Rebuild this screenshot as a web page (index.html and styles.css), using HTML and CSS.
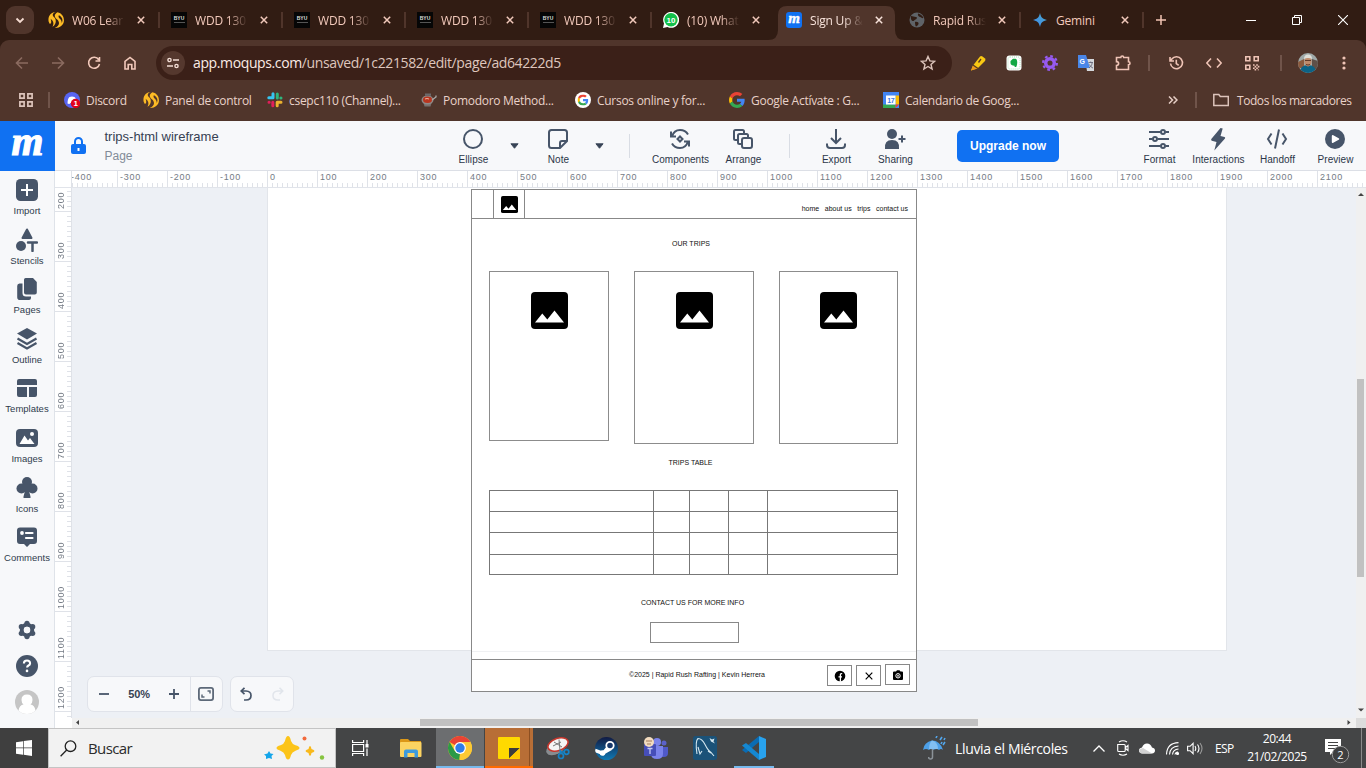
FILE: index.html
```html
<!DOCTYPE html>
<html lang="es">
<head>
<meta charset="utf-8">
<title>Sign Up &amp; moqups</title>
<link rel="stylesheet" href="styles.css">
</head>
<body>
<svg class="defs" aria-hidden="true">
  <defs>
    <symbol id="x" viewBox="0 0 8 8"><path d="M.8.8l6.400 6.400M7.200.8L.8 7.200" fill="none" stroke="currentColor" stroke-width="1.500"/></symbol>
    <symbol id="path" viewBox="0 0 16 16"><path d="M.6 9.500C-.4 3.800 3.500 0 7.800 0 4.500 1 3.900 3.200 5.800 5 8.700 7.200 8.600 12 4.500 14.800 6.500 11 4.900 8.500 2.600 6.800 3.700 9.500 3.300 12 1.600 11.800zM9.500.2C14 1 16.400 5.300 15.900 9.300 15.300 13.500 11.500 16.300 6.800 15.900 11.500 14 12 10.500 9.500 7.800 5.700 4.500 6 2.500 9.500.2zM11 3.200c-1.300 1.600.2 2.700 1.600 4.200 1 1.200 1.300 2.700 1 4 1.800-3.500.6-6.500-2.600-8.200z" fill="#fdbb25"/></symbol>
    <symbol id="g" viewBox="0 0 48 48"><path fill="#ea4335" d="M24 9.500c3.540 0 6.710 1.220 9.210 3.600l6.850-6.850C35.900 2.380 30.470 0 24 0 14.620 0 6.510 5.380 2.560 13.220l7.980 6.190C12.430 13.720 17.740 9.500 24 9.500z"/><path fill="#4285f4" d="M46.980 24.550c0-1.570-.15-3.090-.38-4.550H24v9.020h12.940c-.58 2.960-2.260 5.480-4.780 7.180l7.730 6c4.510-4.180 7.090-10.360 7.090-17.650z"/><path fill="#fbbc05" d="M10.530 28.590c-.48-1.450-.76-2.990-.76-4.590s.27-3.140.76-4.590l-7.980-6.190C.92 16.460 0 20.120 0 24s.92 7.540 2.560 10.780l7.970-6.190z"/><path fill="#34a853" d="M24 48c6.480 0 11.930-2.130 15.890-5.810l-7.730-6c-2.150 1.450-4.920 2.300-8.160 2.300-6.260 0-11.570-4.220-13.470-9.910l-7.980 6.190C6.510 42.620 14.620 48 24 48z"/></symbol>
    <symbol id="pic" viewBox="0 0 37 37"><rect width="37" height="37" rx="4" fill="#000"/><path d="M4 30.500l7.300-9 5 6 7.200-9L33 30.500z" fill="#fff"/></symbol>
    <symbol id="caret" viewBox="0 0 10 6"><path d="M1 .5h8L5 5.500z" fill="currentColor" stroke="currentColor" stroke-linejoin="round"/></symbol>
  </defs>
</svg>

<header class="tabs">
  <button class="tab-menu"><svg width="10" height="7" viewBox="0 0 10 7"><path d="M1.500 1.500L5 5l3.500-3.500" fill="none" stroke="#f6dcd2" stroke-width="1.800"/></svg></button>
  <div class="tab"><svg class="fav"><use href="#path"/></svg><span class="ttl">W06 Lear</span><svg class="cls"><use href="#x"/></svg></div>
  <div class="tab"><i class="fav byu">BYU<b></b></i><span class="ttl">WDD 130</span><svg class="cls"><use href="#x"/></svg></div>
  <div class="tab"><i class="fav byu">BYU<b></b></i><span class="ttl">WDD 130</span><svg class="cls"><use href="#x"/></svg></div>
  <div class="tab"><i class="fav byu">BYU<b></b></i><span class="ttl">WDD 130</span><svg class="cls"><use href="#x"/></svg></div>
  <div class="tab"><i class="fav byu">BYU<b></b></i><span class="ttl">WDD 130</span><svg class="cls"><use href="#x"/></svg></div>
  <div class="tab nosep"><svg class="fav" viewBox="0 0 16 16"><path d="M0 16l1-4.500A8 8 0 1 1 4.500 15z" fill="#fff"/><circle cx="8" cy="7.800" r="6.700" fill="#12c04a"/><text x="8" y="10.800" class="wa">10</text></svg><span class="ttl">(10) What</span><svg class="cls"><use href="#x"/></svg></div>
  <div class="tab active nosep"><svg class="shape" width="137" height="34"><path d="M0 34q10 0 10-10V9q0-9 9-9h99q9 0 9 9v15q0 10 10 10z" fill="#50352b"/></svg><i class="fav mq">m</i><span class="ttl">Sign Up &amp;</span><svg class="cls"><use href="#x"/></svg></div>
  <div class="tab"><svg class="fav" viewBox="0 0 16 16"><circle cx="8" cy="8" r="7.500" fill="#5f6368"/><path d="M2 4c2 0 3 1 5 1 1.500 0 1 2-.5 2.500S5 9.500 3.500 9 1.500 6 2 4zM9 1.500c2 .5 4.500 2 5.500 4.500-1.500.5-2-.5-3.500-1S8.500 3.500 9 1.500zM6 10c2-.5 4 .5 3.500 2S7.500 14.500 7 14.500 6 12 6 10z" fill="#311c13"/></svg><span class="ttl">Rapid Rus</span><svg class="cls"><use href="#x"/></svg></div>
  <div class="tab"><svg class="fav gem" viewBox="0 0 16 16"><defs><linearGradient id="gm" x1="0" y1="1" x2="1" y2="0"><stop offset="0" stop-color="#3f8cf0"/><stop offset="1" stop-color="#4aa6c8"/></linearGradient></defs><path d="M8 1C9 5.500 10.500 7 15 8 10.500 9 9 10.500 8 15 7 10.500 5.500 9 1 8 5.500 7 7 5.500 8 1z" fill="url(#gm)"/></svg><span class="ttl">Gemini</span><svg class="cls"><use href="#x"/></svg></div>
  <svg class="plus" width="10" height="10" viewBox="0 0 10 10"><path d="M5 0v10M0 5h10" stroke="#f2c4b4" stroke-width="1.500"/></svg>
  <div class="win">
    <svg width="10" height="10"><path d="M0 5.500h10" stroke="#fff"/></svg>
    <svg width="10" height="10"><path d="M.5 2.500h7v7h-7zM2.500 2.500v-2h7v7h-2" fill="none" stroke="#fff"/></svg>
    <svg width="10" height="10"><path d="M0 0l10 10M10 0L0 10" stroke="#fff" stroke-width="1.100"/></svg>
  </div>
</header>

<div class="chrome">
  <div class="bar">
    <svg class="nv dim" viewBox="0 0 16 16"><path d="M14 8H2.500M8 2.500L2.500 8 8 13.500"/></svg>
    <svg class="nv dim" viewBox="0 0 16 16"><path d="M2 8h11.500M8 2.500L13.500 8 8 13.500"/></svg>
    <svg class="nv" viewBox="0 0 16 16"><path d="M12.700 4.700A5.500 5.500 0 1 0 13.500 9M13.500 2v4H9.500"/></svg>
    <svg class="nv" viewBox="0 0 16 16"><path d="M3 14V6.500l5-4 5 4V14H9.800V9.500H6.200V14z"/></svg>
    <div class="omni">
      <span class="site"><svg width="12" height="12" viewBox="0 0 12 12" fill="none" stroke="#f4ded6" stroke-width="1.400"><circle cx="2.500" cy="3" r="1.600"/><path d="M6 3h6M0 9h6"/><circle cx="9.500" cy="9" r="1.600"/></svg></span>
      <span class="url"><b>app.moqups.com</b>/unsaved/1c221582/edit/page/ad64222d5</span>
      <svg class="star" viewBox="0 0 16 16"><path d="M8 1.500l1.900 4.400 4.700.4-3.600 3.100 1.100 4.600L8 11.500 3.900 14 5 9.400 1.400 6.300l4.700-.4z"/></svg>
    </div>
    <div class="ext">
      <svg viewBox="0 0 16 16"><path d="M1 15.500l2-5L10 1.500q1-1 2.500 0L15 3.500q1 1 0 2.500L8 13z" fill="#f9c813"/><path d="M1 15.500l2-5 5 3z" fill="#ee9a1c"/><path d="M8.500 7.500l2.500-3.500M3 10l5 3.500" stroke="#5a3a20" stroke-width="1.300"/></svg>
      <svg viewBox="0 0 16 16"><rect x=".5" y=".5" width="15" height="15" rx="3" fill="#fff"/><rect x="2" y="2" width="12" height="12" rx="2" fill="none" stroke="#a9e2bb" stroke-dasharray="1 1"/><path d="M4.500 6L7 3.800h2.500c2 .5 2.200 4.500 1 7.700-1 1-2.200.5-2-.8-2.300 0-4-1-4-2.700z" fill="#13a844"/></svg>
      <svg viewBox="0 0 16 16"><circle cx="8" cy="8" r="4.300" fill="none" stroke="#965af0" stroke-width="3.500"/><circle cx="8" cy="8" r="6.900" fill="none" stroke="#965af0" stroke-width="2.200" stroke-dasharray="2.700 2.720"/></svg>
      <svg viewBox="0 0 16 16"><path d="M7 4h9v12H9z" fill="#d5d8dc"/><path d="M0 0h8l4 13H0z" fill="#4a86e8"/><text x="1.600" y="9" class="gt">G</text><path d="M10.500 7.500h4.500M12.700 6.500v1M11 13c2-1.500 3-3 3.200-5.500M11.500 9.500c1 2 2 3 3.500 3.500" stroke="#667" fill="none" stroke-width=".9"/></svg>
      <svg class="puz" viewBox="0 0 16 16" fill="none" stroke="#efc4b6" stroke-width="1.600"><path d="M1.500 2.500h4.300c0-2 2.900-2 2.900 0h4.800v4.300c2 0 2 2.900 0 2.900v4.800h-12v-4c2.800 0 2.800-3.900 0-3.900z"/></svg>
    </div>
    <i class="sep e1"></i>
    <div class="acts">
      <svg viewBox="0 0 16 16"><path d="M2.500 8.500A6 6 0 1 0 3.800 4L2 6M2 2v4h4M8.300 4.800V8.500l2.400 1.800"/></svg>
      <svg viewBox="0 0 16 16"><path d="M5 3.500L.8 8 5 12.500M11 3.500L15.200 8 11 12.500"/></svg>
      <svg viewBox="0 0 16 16"><path d="M1.800 1.800h4v4h-4zM10.200 1.800h4v4h-4zM1.800 10.200h4v4h-4z"/><path d="M9 10h6M10.600 11.600h6M9 13.200h6M10.600 14.800h4" stroke-dasharray="1.600 1.600"/></svg>
    </div>
    <i class="sep e2"></i>
    <svg class="ava" viewBox="0 0 20 20"><defs><clipPath id="cp"><circle cx="10" cy="10" r="10"/></clipPath></defs><g clip-path="url(#cp)"><path fill="#9fa9a8" d="M0 0h20v20H0z"/><path d="M0 9l6-3v9H0z" fill="#8b5a3e"/><path d="M14 6l6 2v8h-6z" fill="#5f5048"/><path d="M2 20q0-8 8-8t8 8z" fill="#0c6386"/><ellipse cx="10" cy="8.500" rx="3.600" ry="5" fill="#c08a6a"/><path d="M6 6Q6 1.500 10 1.500T14 6q-4-2-8 0z" fill="#deded8"/><path d="M7 7.500h6M8 11.500q2 1 4 0" stroke="#613a2a" fill="none"/></g></svg>
    <svg class="dots" width="4" height="14" fill="#efc4b6"><circle cx="2" cy="2" r="1.600"/><circle cx="2" cy="7" r="1.600"/><circle cx="2" cy="12" r="1.600"/></svg>
  </div>
  <nav class="marks">
    <svg class="apps" width="14" height="14" fill="none" stroke="#dcc3ba" stroke-width="1.700"><path d="M.9.9h4.200v4.200H.9zM8.900.9h4.200v4.200H8.900zM.9 8.900h4.200v4.200H.9zM8.900 8.900h4.200v4.200H8.900z"/></svg>
    <i class="sep"></i>
    <a class="bm w1"><svg viewBox="0 0 16 16"><circle cx="8" cy="8" r="8" fill="#5865f2"/><path d="M3.500 11.500q0-5 2-6.500 2.500-1 5 0 2 1.500 2 6-2 1.500-3 0h-3q-1 1.500-3 .5z" fill="#fff"/><circle cx="11.500" cy="11.500" r="4.700" fill="#e0001b"/><text x="11.500" y="14.300" class="bd">1</text></svg><span>Discord</span></a>
    <a class="bm w2"><svg><use href="#path"/></svg><span>Panel de control</span></a>
    <a class="bm"><svg viewBox="0 0 16 16" fill="none" stroke-width="3" stroke-linecap="round"><path d="M6 1.800v4M1.800 5.800h4" stroke="#36c5f0"/><path d="M10.300 2v4M13.800 6h.2" stroke="#2eb67d"/><path d="M10.200 10.200v3.600M10.200 10.200h3.800" stroke="#ecb22e"/><path d="M5.800 10.200v3.600M2 10.200h.2" stroke="#e01e5a"/></svg><span>csepc110 (Channel)...</span></a>
    <a class="bm"><svg viewBox="0 0 16 16"><path d="M2.500 11h8l-1 3.500h-6z" fill="#77706e"/><ellipse cx="6.500" cy="8" rx="6" ry="4.500" fill="#8f8a88"/><ellipse cx="6.500" cy="7.800" rx="4.500" ry="3.200" fill="#b8351f"/><path d="M11 8l4-3v-1.500" stroke="#a9a9a8" stroke-width="1.300" fill="none"/><path d="M4 1.500h6v2.300H4z" fill="#6b6a6c"/><path d="M4 7q2-1 4 0" stroke="#f2b4a0" fill="none"/></svg><span>Pomodoro Method...</span></a>
    <a class="bm"><svg viewBox="0 0 16 16"><circle cx="8" cy="8" r="8" fill="#fff"/><use href="#g" x="2.500" y="2.500" width="11" height="11"/></svg><span>Cursos online y for...</span></a>
    <a class="bm"><svg><use href="#g"/></svg><span>Google Actívate : G...</span></a>
    <a class="bm"><svg viewBox="0 0 16 16"><path d="M0 0h16v16H0z" fill="#4285f4"/><path d="M12.500 3.500H16v9h-3.500z" fill="#fbbc04"/><path d="M0 12.500h12.500V16H0z" fill="#34a853"/><path d="M12.500 12.500H16L12.500 16z" fill="#ea4335"/><path d="M3 3.500h9.500v9H3z" fill="#fff"/><text x="7.800" y="11" class="cal">17</text></svg><span>Calendario de Goog...</span></a>
    <svg class="more" width="10" height="8" fill="none" stroke="#e7cfc6" stroke-width="1.500"><path d="M1 .5L4.500 4 1 7.500M5.500.5L9 4 5.500 7.500"/></svg>
    <i class="sep s2"></i>
    <a class="bm all"><svg viewBox="0 0 16 16" fill="none" stroke="#dcc3ba" stroke-width="1.500"><path d="M.8 13.500v-11h5l1.500 2h8v9z"/></svg><span>Todos los marcadores</span></a>
  </nav>
</div>

<main class="app">
  <aside class="side">
    <div class="logo">m</div>
    <div class="tool"><svg viewBox="0 0 22 22"><rect width="22" height="22" rx="4.500"/><path d="M11 5v12M5 11h12" stroke="#fff" stroke-width="2"/></svg>Import</div>
    <div class="tool"><svg viewBox="0 0 22 24" class="tall"><path d="M11 1.500l4.500 8.500h-9z" stroke="#475569" stroke-width="2" stroke-linejoin="round"/><circle cx="5" cy="18" r="5"/><path d="M12 14.500h9M16.500 14.500V23" stroke="#475569" stroke-width="2.500" stroke-linecap="round"/></svg>Stencils</div>
    <div class="tool"><svg viewBox="0 0 22 22"><path d="M10.500 0h6.500l3.800 4v10.500a2 2 0 0 1-2 2H10a2 2 0 0 1-2-2V2a2 2 0 0 1 2.500-2z"/><path d="M3.500 5.500h3V15q0 3.500 3.500 3.500h5V20q0 2-2 2H4q-2.800 0-2.800-2.800V8q0-2.500 2.300-2.500z"/></svg>Pages</div>
    <div class="tool"><svg viewBox="0 0 22 22"><path d="M11 0l10 5.500L11 11.500 1 5.500z"/><path d="M1.500 10.500L11 16l9.500-5.500M1.500 15L11 20.500 20.500 15" fill="none" stroke="#475569" stroke-width="2.200"/></svg>Outline</div>
    <div class="tool"><svg viewBox="0 0 22 22"><path d="M3 2h16q2 0 2 2v4H1V4q0-2 2-2zM1 10h10v10H3q-2 0-2-2zM13 10h8v8q0 2-2 2h-6z"/></svg>Templates</div>
    <div class="tool"><svg viewBox="0 0 22 22"><rect y="2" width="22" height="18" rx="4"/><circle cx="16" cy="7" r="2" fill="#fff"/><path d="M3.500 17L8.500 8.500l3.500 5 2-2.500 4.500 6z" fill="#fff"/></svg>Images</div>
    <div class="tool"><svg viewBox="0 0 22 22"><circle cx="11" cy="5" r="5"/><circle cx="5.500" cy="11.500" r="5"/><circle cx="16.500" cy="11.500" r="5"/><path d="M9 8h4v6l1.500 5.500v1.500h-7v-1.500L9 14z"/></svg>Icons</div>
    <div class="tool"><svg viewBox="0 0 22 22"><path d="M4 1.500h14q3 0 3 3V15q0 3-3 3h-4l-3 3-3-3H4q-3 0-3-3V4.500q0-3 3-3z"/><circle cx="6" cy="7" r="1.900" fill="#fff"/><path d="M10 7h6.500M10 12h6.500" stroke="#fff" stroke-width="2.200" stroke-linecap="round"/></svg>Comments</div>
    <div class="foot">
      <svg viewBox="0 0 22 22"><circle cx="11" cy="11" r="5.700" fill="none" stroke="#475569" stroke-width="4.500"/><circle cx="11" cy="3.800" r="2.900"/><circle cx="17.200" cy="7.400" r="2.900"/><circle cx="17.200" cy="14.600" r="2.900"/><circle cx="11" cy="18.200" r="2.900"/><circle cx="4.800" cy="14.600" r="2.900"/><circle cx="4.800" cy="7.400" r="2.900"/><circle cx="11" cy="11" r="3.600" fill="#f7f8fa"/></svg>
      <svg viewBox="0 0 22 22"><circle cx="11" cy="11" r="11"/><path d="M7.900 8.500q0-3 3.100-3t3.100 2.700q0 1.500-1.600 2.300-1.400.8-1.400 2" fill="none" stroke="#fff" stroke-width="2.100"/><circle cx="11" cy="15.900" r="1.300" fill="#fff"/></svg>
      <svg viewBox="0 0 24 24" class="user"><circle cx="12" cy="12" r="12" fill="#c5c5c5"/><path d="M3.500 20.500q1-5.500 5-6-2-1.500-2-4.500 0-5.500 5.500-5.500t5.500 5.500q0 3-2 4.500 4 .5 5 6Q17 24 12 24t-8.500-3.500z" fill="#fff"/></svg>
    </div>
  </aside>

  <section class="work">
    <header class="head">
      <div class="lock"><svg width="15" height="17" viewBox="0 0 15 17"><path d="M4 8V4.500a3.500 3.500 0 0 1 7 0V8" fill="none" stroke="#1071f2" stroke-width="2"/><rect y="7" width="15" height="10" rx="2" fill="#1071f2"/><path d="M7.500 11v3" stroke="#fff" stroke-width="2"/></svg></div>
      <div class="title"><h1>trips-html wireframe</h1><p>Page</p></div>
      <div class="act a50"><svg viewBox="0 0 20 20"><circle cx="10" cy="10" r="9"/></svg><span>Ellipse</span></div>
      <div class="dd a32"><svg><use href="#caret"/></svg></div>
      <div class="act a56"><svg viewBox="0 0 20 20"><path d="M12 19H3.500Q1 19 1 16.500v-13Q1 1 3.500 1h13Q19 1 19 3.500V12zM12 19v-5q0-2 2-2h5"/></svg><span>Note</span></div>
      <div class="dd a26"><svg><use href="#caret"/></svg></div>
      <i class="vs"></i>
      <div class="act a68"><svg viewBox="0 0 20 20"><path d="M2 7.500Q4 1 10 1q5.500 0 8 4.500M18 12.500Q16 19 10 19q-5.500 0-8-4.500M1 2.500v5h5M19 17.500v-5h-5M10 7.500l2.500 2.500-2.500 2.500L7.500 10z"/></svg><span>Components</span></div>
      <div class="act a58"><svg viewBox="0 0 20 20"><path d="M4.500 11H2.500Q1 11 1 9.500v-7Q1 1 2.500 1h7Q11 1 11 2.500V4M8 15H6.500Q5 15 5 13.500V6.500Q5 5 6.500 5h7Q15 5 15 6.500V8"/><rect x="9" y="9" width="10" height="10" rx="2"/></svg><span>Arrange</span></div>
      <i class="vs"></i>
      <div class="act a60"><svg viewBox="0 0 20 20"><path d="M10 0v14M5 9l5 5 5-5M1 14.500V16q0 3 3 3h12q3 0 3-3v-1.500"/></svg><span>Export</span></div>
      <div class="act a58"><svg viewBox="0 0 22 20" class="fill wide"><circle cx="8" cy="5" r="5"/><path d="M1 20q-1-9 7-9t7 9z"/><path d="M14.500 10h7M18 6.500v7" stroke="#475569" stroke-width="2"/></svg><span>Sharing</span></div>
      <div class="up"><button>Upgrade now</button></div>
      <div class="act a60 gap"><svg viewBox="0 0 20 20"><path d="M0 3h11.500M16.500 3H20M0 10h3.500M8.500 10H20M0 17h11.500M16.500 17H20"/><circle cx="14" cy="3" r="2"/><circle cx="6" cy="10" r="2"/><circle cx="14" cy="17" r="2"/></svg><span>Format</span></div>
      <div class="act a58"><svg viewBox="0 0 20 20" class="fill"><path d="M12.500-1L3.300 10q-.6 1.200.5 1.700L8.500 13l-2.200 8.500L17 9.500q.5-1.200-.5-1.600L12.500 7 14.700-.5z"/></svg><span>Interactions</span></div>
      <div class="act a60"><svg viewBox="0 0 20 20"><path d="M4.500 4.500L1 10l3.500 5.500M15.500 4.500L19 10l-3.500 5.500M12 .5L8 19.500"/></svg><span>Handoff</span></div>
      <div class="act a56"><svg viewBox="0 0 20 20" class="fill"><circle cx="10" cy="10" r="10"/><path d="M7.800 7l5.400 3-5.400 3z" fill="#fff" stroke="#fff" stroke-linejoin="round"/></svg><span>Preview</span></div>
    </header>
    <div class="hrule"><i class="corner"></i><div class="hl"><span class="cut">-400</span><span>-300</span><span>-200</span><span>-100</span><span>0</span><span>100</span><span>200</span><span>300</span><span>400</span><span>500</span><span>600</span><span>700</span><span>800</span><span>900</span><span>1000</span><span>1100</span><span>1200</span><span>1300</span><span>1400</span><span>1500</span><span>1600</span><span>1700</span><span>1800</span><span>1900</span><span>2000</span><span>2100</span></div></div>
    <div class="stage">
      <div class="vrule"><span>200</span><span>300</span><span>400</span><span>500</span><span>600</span><span>700</span><span>800</span><span>900</span><span>1000</span><span>1100</span><span>1200</span></div>
      <div class="canvas">
        <div class="board"></div>
        <div class="wire">
          <div class="wtop"><div class="wlogo"><svg width="17" height="17"><use href="#pic"/></svg></div><nav><span>home</span><span>about us</span><span>trips</span><span>contact us</span></nav></div>
          <h2 class="t1">OUR TRIPS</h2>
          <div class="cards"><div class="card short"><svg><use href="#pic"/></svg></div><div class="card"><svg><use href="#pic"/></svg></div><div class="card slim"><svg><use href="#pic"/></svg></div></div>
          <h2 class="t2">TRIPS TABLE</h2>
          <div class="table"><i></i><i></i><i></i><i></i><i></i><i></i><i></i><i></i><i></i><i></i><i></i><i></i><i></i><i></i><i></i><i></i><i></i><i></i><i></i><i></i></div>
          <h2 class="t3">CONTACT US FOR MORE INFO</h2>
          <div class="field"></div>
          <footer class="wfoot"><p>©2025 | Rapid Rush Rafting | Kevin Herrera</p>
            <div class="soc"><span><svg viewBox="0 0 12 12"><circle cx="6" cy="6" r="5.300"/><path d="M6.400 11.800V6.800H8M6.400 7V4.700q0-1.300 1.800-1.100M4.500 6.800h2" fill="none" stroke="#fff" stroke-width="1.300"/></svg></span><span><svg viewBox="0 0 12 12"><path d="M2.700 2.700l6.600 6.600M9.300 2.700L2.700 9.300" stroke="#000" stroke-width="1.200"/></svg></span><span class="last"><svg viewBox="0 0 12 12"><path d="M2 2.500h2L5 1.200h2.500l1 1.300H10q1 0 1 1V10q0 1-1 1H2q-1 0-1-1V3.500q0-1 1-1z"/><circle cx="6" cy="6.800" r="2.200" fill="none" stroke="#fff"/><path d="M5 6.800h2M6 5.800v2" stroke="#fff" stroke-width=".7"/></svg></span></div>
          </footer>
        </div>
        <div class="pills">
          <div class="pill p1"><svg width="10" height="10"><path d="M0 5h10" stroke="#475569" stroke-width="1.800"/></svg><b>50%</b><svg width="10" height="10"><path d="M0 5h10M5 0v10" stroke="#475569" stroke-width="1.800"/></svg><span><svg width="16" height="14" viewBox="0 0 16 14"><rect x=".9" y=".9" width="14.200" height="12.200" rx="2" fill="none" stroke="#5d6979" stroke-width="1.800"/><path d="M9.500 4h2.500v2.500M4 7.500V10h2.500" fill="none" stroke="#5d6979" stroke-width="1.500"/></svg></span></div>
          <div class="pill p2"><svg width="12" height="14" viewBox="0 0 12 14"><path d="M4.500.8L1.200 4l3.300 3.200M1.500 4H6q5 .2 5 4.500Q11 13 6 13H4" fill="none" stroke="#475569" stroke-width="1.700"/></svg><svg width="12" height="14" viewBox="0 0 12 14"><path d="M7.500.8L10.800 4 7.500 7.200M10.500 4H6q-5 .2-5 4.500Q1 13 6 13h2" fill="none" stroke="#e1e5eb" stroke-width="1.500"/></svg></div>
        </div>
      </div>
      <div class="vscroll"><svg width="10" height="10"><path d="M2 8L5 5l3 3z"/></svg><i></i><svg class="da" width="10" height="10"><path d="M2 3.500l3 3 3-3z"/></svg></div>
    </div>
    <div class="hscroll"><svg width="10" height="10"><path d="M7 2L4 4.500 7 7z"/></svg><i></i><svg class="ra" width="10" height="10"><path d="M3.500 2l3 2.500-3 2.500z"/></svg><b></b></div>
  </section>
</main>

<footer class="task">
  <div class="start"><svg width="16" height="16" fill="#fff"><path d="M0 2.200l7-1v6.400H0zM7.700 1.100L16 0v7.600H7.700zM0 8.300h7v6.500l-7-1zM7.700 8.300H16V16l-8.300-1.200z"/></svg></div>
  <div class="find"><svg class="mag" width="17" height="17" viewBox="0 0 17 17" fill="none" stroke="#222" stroke-width="1.300"><circle cx="10.500" cy="6.200" r="5.300"/><path d="M6.700 10L.6 16.200"/></svg><span>Buscar</span>
    <svg class="spark" width="62" height="28" viewBox="0 0 62 28"><path d="M24 2q2 0 3 5 1 3 4.500 4.300 4 1.200 4 2.700t-4 2.700Q28 18 27 21q-1 4.500-3 4.500T21 21q-1-3-4.500-4.300-4-1.200-4-2.700t4-2.700Q20 10 21 7q1-5 3-5z" fill="#fcc419"/><path d="M46 12q1 0 1.500 3 3 1 3 2t-3 2q-.5 3-1.500 3t-1.500-3q-3-1-3-2t3-2q.5-3 1.500-3z" fill="#f8b91c"/><path d="M5 17l1.500 2.500 3 .5-2 2 .5 3-3-1-3 1v-3L0 20.500l3.500-1z" fill="#14a5ea"/><circle cx="40.500" cy="4.500" r="2" fill="#f26a3c"/><circle cx="58" cy="23.500" r="2.200" fill="#86c440"/></svg></div>
  <div class="ico v1"><svg width="17" height="16" fill="none" stroke="#fff" stroke-width="1.200"><path d="M.6 0v2.500h11V0M.6 4.500h11v7H.6zM.6 16v-2.500h11V16M15 0v4M15 8.500V16"/><path d="M13.500 4h3v3.500h-3z" fill="#fff" stroke="none"/></svg></div>
  <div class="ico v2"><svg width="22" height="19"><path d="M0 1q0-1 1-1h7l2 2h11v6H0z" fill="#dc9818"/><rect y="3" width="21.500" height="15" rx="1" fill="#fcd462"/><path d="M4 18.500v-6q0-2 2-2h10q2 0 2 2v6h-3.500V14h-7v4.500z" fill="#3e9bdd"/></svg></div>
  <div class="ico on chr"><svg width="24" height="24" viewBox="0 0 24 24"><circle cx="12" cy="12" r="12" fill="#fcc934"/><path d="M12 12L1.600 6A12 12 0 0 1 22.400 6z" fill="#e94335"/><path d="M22.400 6H12l-2 2 7 7-5 9A12 12 0 0 0 22.400 6z" fill="#fcc934"/><path d="M1.600 6l5.200 9L12 18l-.5 6A12 12 0 0 1 1.600 6z" fill="#2b9a47"/><path d="M11.500 24L17 15l-5 2z" fill="#fcc934"/><circle cx="12" cy="12" r="5.900" fill="#fff"/><circle cx="12" cy="12" r="4.700" fill="#2f7de9"/></svg></div>
  <div class="ico on note"><svg width="22" height="22"><rect width="22" height="22" rx="1" fill="#ffd900"/><path d="M11 11h11L11 21.500z" fill="#3c3c3c"/><path d="M22 11v10.500H11z" fill="#ffc800"/></svg></div>
  <div class="ico v3"><svg width="24" height="23"><ellipse cx="10" cy="11" rx="10.500" ry="6" transform="rotate(-28 10 11)" fill="#888c90"/><ellipse cx="12" cy="7.500" rx="10.500" ry="6" transform="rotate(-20 12 7.500)" fill="#f4f4f4" stroke="#c7372d" stroke-width="1.600"/><path d="M7 9l8-4M13 2.500l1 11M8 5l8 5" stroke="#777"/><g fill="none" stroke="#1583c7" stroke-width="1.700"><circle cx="15" cy="19" r="2.500"/><circle cx="20.500" cy="15" r="2.300"/><path d="M15 16l-1-3M18 15h-4"/></g></svg></div>
  <div class="ico v4"><svg width="23" height="23" viewBox="0 0 23 23"><defs><linearGradient id="st" x2="0" y2="1"><stop stop-color="#111a43"/><stop offset="1" stop-color="#0f79b4"/></linearGradient><clipPath id="sc"><circle cx="11.500" cy="11.500" r="11.500"/></clipPath></defs><circle cx="11.500" cy="11.500" r="11.500" fill="url(#st)"/><g clip-path="url(#sc)"><path d="M0 13.500l8 3 5-6M8 16l8-4.500" stroke="#fff" stroke-width="3.500" fill="none"/></g><circle cx="15" cy="8.500" r="3.700" fill="#17386a" stroke="#fff" stroke-width="1.800"/><circle cx="7.500" cy="16" r="2.800" fill="#fff"/></svg></div>
  <div class="ico v5"><svg width="24" height="23"><circle cx="20" cy="6" r="2.500" fill="#5b62c9"/><path d="M15 10h9v6q0 4-4 4h-5z" fill="#5059c9"/><circle cx="13" cy="5" r="4" fill="#7b83eb"/><path d="M7 9h12v8q0 5-6 5t-6-5z" fill="#7b83eb"/><rect y="7" width="12" height="12" rx="1" fill="#464eb8"/><path d="M3.500 11.500h5M6 11.500V17" stroke="#c4c8f4" stroke-width="1.300"/><circle cx="5" cy="5" r="5" fill="#f3dcbf"/><path d="M2 4h6M3 7h4" stroke="#a27b5b"/></svg></div>
  <div class="ico v6"><svg width="24" height="24" viewBox="0 0 24 24"><rect width="24" height="24" rx="2.500" fill="#1b5278"/><path d="M4 18Q2 5 5 2.500q4 0 7 6t6 8l3 3.500M5 11l2 7 2-3M15 15l3 2" fill="none" stroke="#d6e8f0" stroke-width="1.100"/><path d="M16.500 2l2.500 1.500 2.500-1-1 3 1.500 2-4-2z" fill="#d6e8f0"/></svg></div>
  <div class="ico v7"><svg width="24" height="24" viewBox="0 0 24 24"><path d="M17 0v6L4 17l-4-3z" fill="#0a6cb4"/><path d="M0 9.500L4 7l13 11v6z" fill="#1588d2"/><path d="M17 0l7 3v18l-7 3z" fill="#28a2ee"/></svg></div>
  <div class="weather"><svg width="24" height="24" viewBox="0 0 24 24"><path d="M0 14Q1 6 9 4.500 17 4.500 20 14q-2-2-4 0-2-2-6 0-2-2-4 0-3-2-6 0z" fill="#4da0e8"/><path d="M6 13q0-6 3-8.500Q15 6 15 13" fill="#82bff2"/><path d="M9.500 13v8q0 2-2 2t-1.800-2" fill="none" stroke="#8b9298" stroke-width="1.500"/><path d="M13 2l1-2M17 4l2-3M20 9l2-3M21 4l1-2M18 8l1-2" stroke="#53a7ed" stroke-width="1.600"/></svg><span>Lluvia el Miércoles</span></div>
  <div class="tray">
    <svg class="c1" width="12" height="7"><path d="M.5 6.500L6 1l5.500 5.500" fill="none" stroke="#fff" stroke-width="1.300"/></svg>
    <svg class="c2" width="12" height="16" fill="none" stroke="#fff" stroke-width="1.100"><path d="M.7 4.500h6.500q1 0 1 1v5q0 1-1 1H1.700q-1 0-1-1zM8.500 7.500l2.500-2v5l-2.500-2M2 2q4-2.500 8 0M2 14q4 2.500 8 0"/></svg>
    <svg class="c3" width="16" height="11"><path d="M3.500 10.500q-3.500-.5-3.500-3T3 4.500Q4.500.5 8 .5t5 4q3 .5 3 3t-3 3z" fill="#fff"/><path d="M1 6l3-1 9 5.500H3.500Q0 10 0 7.500z" fill="#d2d2d2"/></svg>
    <svg class="c4" width="13" height="13" fill="none" stroke="#fff" stroke-width="1.100"><path d="M.5 12.500Q1 1 12.500.6M3.500 12.500Q4 4.500 12.500 4M6.500 12.500Q7 7.500 12.500 7M9 12.500q.5-2.500 3-2.500"/><circle cx="11.500" cy="11.500" r="1" fill="#fff"/></svg>
    <svg class="c5" width="16" height="13" fill="none" stroke="#fff" stroke-width="1.100"><path d="M.6 4.300h2.500l3-3v10.400l-3-3H.6zM8 4q1.500 2.500 0 5M10.500 2.500q3 4 0 8"/><path d="M13 1q4 5.500 0 11" stroke="#999"/></svg>
    <span class="esp">ESP</span>
    <div class="clock"><span>20:44</span><span>21/02/2025</span></div>
    <svg class="c6" width="26" height="25" viewBox="0 0 26 25"><path d="M0 0h16v13H8l-3 3v-3H0z" fill="#fff"/><path d="M3 3.500h10M3 6.500h10M3 9.500h7" stroke="#444"/><circle cx="15.500" cy="15.500" r="8.200" fill="#3e3f40" stroke="#999"/><text x="15.500" y="20" class="num">2</text></svg>
  </div>
  <i class="peek"></i>
</footer>
</body>
</html>
```
FILE: styles.css
```css
* { box-sizing: border-box; }
body { margin: 0; width: 1366px; height: 768px; overflow: hidden; display: flex; flex-direction: column; font-family: "Liberation Sans", sans-serif; background: #311c13; }
h1, h2, p { margin: 0; font-weight: 400; }
svg { display: block; flex: none; }
.defs { position: absolute; width: 0; height: 0; }
i { font-style: normal; }

/* browser tabs */
.tabs { height: 40px; flex: none; display: flex; align-items: center; font: 12px "Open Sans", sans-serif; color: #f2c9bb; }
.tab-menu { width: 28px; height: 28px; margin: 0 2px 0 6px; border: 0; border-radius: 9px; background: #50352b; display: grid; place-items: center; padding: 0; }
.tab { position: relative; width: 123px; height: 40px; padding-left: 12px; display: flex; align-items: center; flex: none; }
.tab::after { content: ""; position: absolute; right: -1px; top: 12px; width: 2px; height: 16px; background: #50352b; }
.nosep::after { display: none; }
.fav { width: 16px; height: 16px; flex: none; margin-right: 8px; }
.ttl { width: 54px; white-space: nowrap; overflow: hidden; letter-spacing: -.2px; -webkit-mask-image: linear-gradient(90deg, #000 62%, transparent 98%); mask-image: linear-gradient(90deg, #000 62%, transparent 98%); }
.gem + .ttl { mask-image: none; -webkit-mask-image: none; }
.cls { width: 8px; height: 8px; margin-left: 11px; }
.byu { background: #060606; color: #ddd; font: 900 5px/6px "Liberation Sans", sans-serif; text-align: center; padding-top: 3px; }
.byu b { display: block; width: 11px; height: 1px; margin: 1px auto; background: #555; }
.mq { background: #1071f2; border-radius: 3px; color: #fff; font: italic 700 15px/12px "Liberation Serif", serif; text-align: center; -webkit-text-stroke: .4px #fff; }
.wa { font: 700 8px "Liberation Sans", sans-serif; fill: #fff; text-anchor: middle; }
.active { color: #f8e3db; z-index: 0; }
.shape { position: absolute; z-index: -1; left: -6px; top: 6px; }
.plus { margin-left: 13px; }
.win { margin-left: auto; margin-right: 18px; display: flex; gap: 36px; }

/* address bar and bookmarks */
.chrome { height: 81px; flex: none; background: #50352b; border-radius: 9px 9px 0 0; color: #e9d2c9; }
.bar { height: 46px; display: flex; align-items: center; padding-left: 14px; }
.nv { width: 16px; height: 16px; margin-right: 20px; fill: none; stroke: #f2c9bb; stroke-width: 1.6; }
.dim { stroke: #8b6b60; }
.omni { width: 796px; height: 34px; margin-left: -2px; border-radius: 17px; background: #3b2018; display: flex; align-items: center; padding-left: 5px; flex: none; }
.site { width: 24px; height: 24px; border-radius: 50%; background: #55382e; display: grid; place-items: center; }
.url { font: 14px "Open Sans", sans-serif; margin: -2px 0 0 8px; color: #dfc6bd; letter-spacing: -.38px; }
.url b { font-weight: 400; color: #fbece6; }
.star { width: 16px; height: 16px; margin: 0 16px 0 auto; fill: none; stroke: #dcc3ba; stroke-width: 1.4; }
.ext { display: flex; gap: 20px; margin-left: 18px; }
.ext svg, .acts svg { width: 16px; height: 16px; }
.ext .puz { margin-left: 1px; margin-right: -1px; }
.gt { font: 700 7px "Liberation Sans", sans-serif; fill: #fff; }
.sep { width: 2px; height: 16px; background: #70544a; flex: none; }
.e1 { margin: 0 18px 0 18px; }
.acts { display: flex; gap: 22px; fill: none; stroke: #efc4b6; stroke-width: 1.6; }
.e2 { margin: 0 16px 0 20px; }
.ava { width: 20px; height: 20px; }
.dots { margin-left: 24px; }
.marks { height: 35px; display: flex; align-items: center; padding: 0 0 7px 19px; font: 12px "Open Sans", sans-serif; }
.marks > .sep { margin: 0 14px 0 15px; }
.bm { display: flex; align-items: center; gap: 6px; width: 154px; white-space: nowrap; flex: none; letter-spacing: -.28px; }
.bm svg { width: 16px; height: 16px; }
.w1 { width: 79px; }
.w2 { width: 124px; }
.more { margin-left: 131px; }
.marks > .s2 { margin: 0 16px 0 17px; }
.all { gap: 8px; width: auto; letter-spacing: -.44px; }
.bd { font: 700 8px "Liberation Sans", sans-serif; fill: #fff; text-anchor: middle; }
.cal { font: 700 7px "Liberation Sans", sans-serif; fill: #3b78e7; text-anchor: middle; }

/* editor */
.app { height: 607px; flex: none; display: flex; background: #fff; }
.side { width: 55px; background: #f7f8fa; border-right: 1px solid #dfe3e9; display: flex; flex-direction: column; flex: none; }
.logo { width: 55px; height: 50px; margin-bottom: 7px; background: #1071f2; color: #fff; font: italic 700 41px/41px "Liberation Serif", serif; text-align: center; flex: none; -webkit-text-stroke: 1.2px #fff; }
.tool { height: 49.6px; padding-top: 1px; display: flex; flex-direction: column; align-items: center; gap: 4px; font-size: 9.5px; line-height: 12px; color: #2f3b4c; }
.tool svg { width: 22px; height: 22px; fill: #475569; }
.tool .tall { height: 24px; margin-top: -1px; margin-bottom: -1px; }
.foot { margin-top: auto; padding-bottom: 14px; display: flex; flex-direction: column; align-items: center; gap: 13px; }
.foot svg { width: 22px; height: 22px; fill: #475569; }
.foot svg:first-child { width: 20px; height: 20px; margin-bottom: 2px; }
.foot .user { width: 24px; height: 24px; }
.work { flex: 1; min-width: 0; display: flex; flex-direction: column; }
.head { height: 50px; flex: none; background: #f7f8fa; border-bottom: 1px solid #dcdfe6; display: flex; font-size: 10px; color: #2b3648; }
.lock { width: 48px; padding-right: 1px; display: grid; place-items: center; }
.title { width: 345px; padding: 8px 0 0 1.5px; color: #364152; }
.title h1 { font-size: 13px; line-height: 16px; }
.title p { font-size: 12px; line-height: 14px; margin-top: 4px; color: #828b98; }
.act { display: flex; flex-direction: column; align-items: center; padding-top: 8px; gap: 5px; line-height: 12px; letter-spacing: .05px; flex: none; white-space: nowrap; }
.act span { padding-left: 1px; }
.act svg { width: 20px; height: 20px; fill: none; stroke: #475569; stroke-width: 2; overflow: visible; }
.act .fill { fill: #475569; stroke: none; }
.act .wide { width: 22px; }
.dd { display: flex; justify-content: center; padding-top: 22px; color: #384456; }
.dd svg { width: 9px; height: 6px; }
.a50 { width: 50px; } .a32 { width: 32px; } .a56 { width: 56px; } .a26 { width: 26px; } .a68 { width: 68px; } .a58 { width: 58px; } .a60 { width: 60px; }
.vs { width: 1px; height: 24px; margin: 13px 16px 0 17px; background: #d9dde4; }
.up { width: 167px; padding-top: 9px; text-align: center; }
.up button { width: 102px; height: 32px; border: 0; border-radius: 5px; background: #1071f2; color: #fff; font: 700 12px "Liberation Sans", sans-serif; padding: 0 0 0 1px; }
.gap { margin-left: 38px; }

/* rulers */
.hrule { height: 17px; flex: none; display: flex; background: #fff; border-bottom: 1px solid #e1e4ea; }
.corner { width: 17px; border-right: 1px solid #dfe2e8; flex: none; }
.hl { flex: 1; display: flex; overflow: hidden; font: 9px/12px "Liberation Sans", sans-serif; letter-spacing: .75px; color: #747b85; background: repeating-linear-gradient(90deg, #dfe2e8 0 1px, transparent 1px 5px) 0 12px / 100% 5px no-repeat; }
.hl span { width: 50px; flex: none; border-left: 1px solid #dfe2e8; padding-left: 2px; }
.hl .cut { width: 45px; border: 0; padding: 0; text-indent: -1px; }
.stage { flex: 1; display: flex; min-height: 0; }
.vrule { width: 17px; flex: none; border-right: 1px solid #dfe2e8; overflow: hidden; background: repeating-linear-gradient(#dfe2e8 0 1px, transparent 1px 5px) 12px 3px / 5px 100% no-repeat, #fff; }
.vrule span { display: block; height: 50px; writing-mode: vertical-rl; transform: rotate(180deg); border-top: 1px solid #dfe2e8; padding-top: 2px; width: 16px; font: 9px/12px "Liberation Sans", sans-serif; letter-spacing: .75px; color: #747b85; }
.vrule span:first-child { height: 24px; }

/* drawing area: objects sit at free coordinates */
.canvas { flex: 1; position: relative; overflow: hidden; background: #edf0f5; }
.board { position: absolute; left: 195px; top: -2px; width: 960px; height: 465px; background: #fff; border: 1px solid #e2e5ea; }
.wire { position: absolute; left: 399px; top: 1px; width: 446px; height: 503px; border: 1px solid #888; background: linear-gradient(#fff 461px, #f0f1f3 461px 462px, #fff 462px); font: 7px/9px "Liberation Sans", sans-serif; color: #111; }
.wtop { height: 29px; border-bottom: 1px solid #888; display: flex; justify-content: space-between; }
.wlogo { width: 32px; margin: -1px 0 -1px 21px; border: 1px solid #888; display: grid; place-items: center; }
.wtop nav { display: flex; gap: 5.6px; padding: 14px 8px 0 0; white-space: nowrap; }
.wire h2 { position: absolute; left: 0; width: 438px; text-align: center; font-size: 7px; line-height: 9px; }
.wire .t1 { top: 49px; } .wire .t2 { top: 268px; width: 437px; } .wire .t3 { top: 408px; width: 441px; }
.cards { position: absolute; left: 17px; top: 81px; display: flex; gap: 25px; align-items: flex-start; }
.card { width: 120px; height: 173px; border: 1px solid #8c8c8c; padding: 20px 0 0 41px; }
.card svg { width: 37px; height: 37px; }
.short { height: 170px; }
.slim { width: 119px; padding-left: 40px; }
.table { position: absolute; left: 17px; top: 300px; width: 409px; height: 85px; display: grid; grid-template-columns: 164px 36px 39px 39px 1fr; grid-template-rows: 21px 21px 22px 20px; border: solid #777; border-width: 1px 0 0 1px; }
.table i { border: solid #777; border-width: 0 1px 1px 0; }
.field { position: absolute; left: 178px; top: 432px; width: 89px; height: 21px; border: 1px solid #888; }
.wfoot { position: absolute; left: 0; right: 0; bottom: 0; height: 32px; border-top: 1px solid #888; display: flex; }
.wfoot p { width: 355px; padding: 10px 0 0 95px; text-align: center; white-space: nowrap; }
.soc { display: flex; gap: 4px; padding-top: 5px; }
.soc span { width: 25px; height: 21px; border: 1px solid #888; display: grid; place-items: center; }
.soc .last { margin-top: -1px; }
.soc svg { width: 12px; height: 12px; }
.pills { position: absolute; left: 15px; top: 488px; display: flex; gap: 7px; }
.pill { height: 36px; background: #f7f8fa; border: 1px solid #e0e3ea; border-radius: 7px; display: flex; align-items: center; }
.p1 { width: 136px; padding-left: 11px; }
.p1 b { width: 60px; text-align: center; font-size: 11px; letter-spacing: -.1px; color: #364152; }
.p1 span { width: 32px; height: 34px; margin-left: 11px; padding-right: 1px; border-left: 1px solid #e0e3ea; display: grid; place-items: center; }
.p2 { width: 64px; padding-left: 9px; gap: 20px; }
.vscroll { width: 10px; background: #f0f0f0; display: flex; flex-direction: column; fill: #444; }
.vscroll i { width: 7px; height: 198px; margin: 181px 0 auto 1px; background: #c1c1c1; }
.da { margin-bottom: 3px; }
.hscroll { height: 10px; flex: none; background: #f0f0f0; margin-left: 17px; display: flex; fill: #444; }
.hscroll i { width: 558px; height: 7px; margin: 1px auto 0 338px; background: #c1c1c1; }
.hscroll .ra { margin-right: 2px; }
.hscroll b { width: 10px; background: #dcdcdc; }

/* taskbar */
.task { height: 40px; flex: none; display: flex; background: #444546; color: #fff; font: 12px "Open Sans", sans-serif; }
.start { width: 48px; display: grid; place-items: center; background: #3f3f3f; }
.find { width: 288px; background: #f2f2f2; border: 1px solid #c4c4c4; display: flex; align-items: center; color: #2b2b2b; font-size: 15px; letter-spacing: -.6px; flex: none; }
.mag { margin: 0 11px; }
.spark { margin-left: auto; margin-right: 9px; }
.ico { width: 49px; display: grid; place-items: center; flex: none; }
.v1 { width: 48px; }
.v2 { width: 52px; padding-left: 1px; }
.chr { width: 48px; background: #6c6e70; border-bottom: 2px solid #76b9ed; margin-right: 1px; padding-top: 1px; }
.note { width: 48px; background: linear-gradient(90deg, #b86e36 44px, #8c4f22 44px 45px, #b86e36 45px); border-bottom: 2px solid #ff6a00; padding-top: 1px; }
.v7 { border-bottom: 2px solid #76b9ed; width: 40px; margin-left: 5px; padding-top: 1px; }
.weather { display: flex; align-items: center; gap: 8px; margin-left: 149px; width: 168px; font-size: 14px; letter-spacing: -.35px; white-space: nowrap; flex: none; }
.tray { display: flex; align-items: center; white-space: nowrap; }
.c1 { margin-left: 2px; } .c2 { margin-left: 12px; } .c3 { margin-left: 10px; } .c4 { margin-left: 11px; } .c5 { margin-left: 8px; }
.esp { margin-left: 12px; width: 20px; letter-spacing: -.6px; }
.clock { margin-left: 10px; width: 64px; display: flex; flex-direction: column; align-items: center; line-height: 18px; letter-spacing: -.4px; }
.c6 { margin: 6px 0 0 16px; }
.peek { width: 1px; margin-left: auto; margin-right: 4px; background: #8a8a8a; }
.num { font: 11px "Open Sans", sans-serif; fill: #fff; text-anchor: middle; }
```
